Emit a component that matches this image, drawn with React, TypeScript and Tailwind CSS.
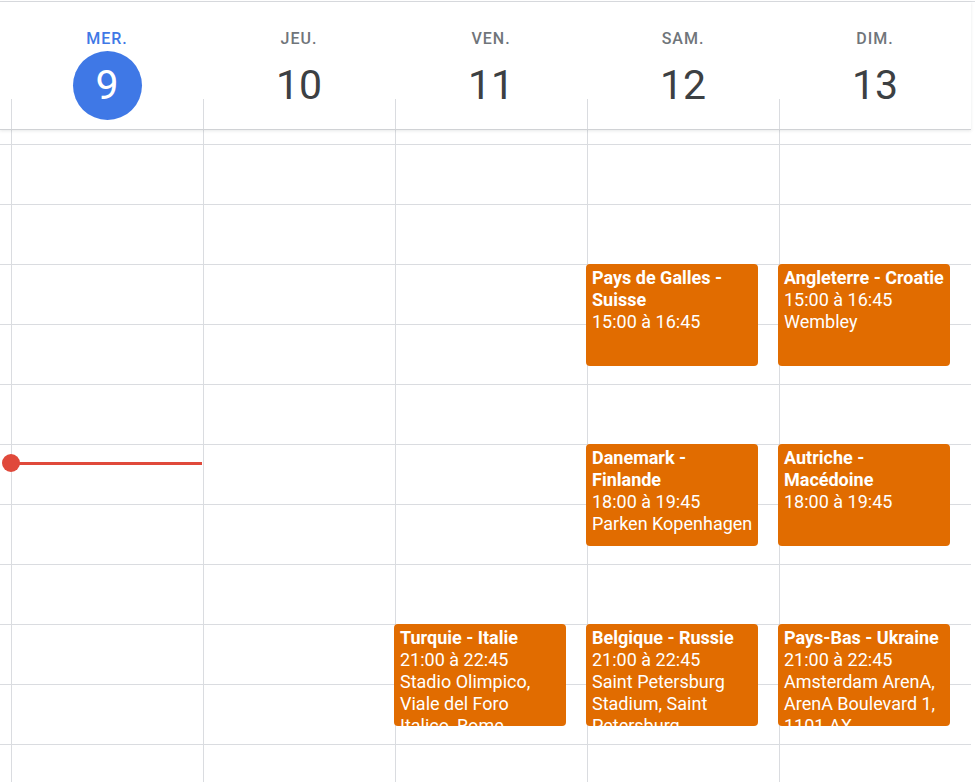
import React from 'react';

interface CalEvent {
  title: string;
  time: string;
  place?: string;
  top: string;
}

interface Day {
  name: string;
  num: string;
  today?: boolean;
  events: CalEvent[];
}

const days: Day[] = [
  { name: 'MER.', num: '9', today: true, events: [] },
  { name: 'JEU.', num: '10', events: [] },
  {
    name: 'VEN.',
    num: '11',
    events: [
      {
        title: 'Turquie - Italie',
        time: '21:00 à 22:45',
        place: 'Stadio Olimpico, Viale del Foro Italico, Rome',
        top: 'top-[494px]',
      },
    ],
  },
  {
    name: 'SAM.',
    num: '12',
    events: [
      { title: 'Pays de Galles - Suisse', time: '15:00 à 16:45', top: 'top-[134px]' },
      {
        title: 'Danemark - Finlande',
        time: '18:00 à 19:45',
        place: 'Parken Kopenhagen',
        top: 'top-[314px]',
      },
      {
        title: 'Belgique - Russie',
        time: '21:00 à 22:45',
        place: 'Saint Petersburg Stadium, Saint Petersburg',
        top: 'top-[494px]',
      },
    ],
  },
  {
    name: 'DIM.',
    num: '13',
    events: [
      {
        title: 'Angleterre - Croatie',
        time: '15:00 à 16:45',
        place: 'Wembley',
        top: 'top-[134px]',
      },
      { title: 'Autriche - Macédoine', time: '18:00 à 19:45', top: 'top-[314px]' },
      {
        title: 'Pays-Bas - Ukraine',
        time: '21:00 à 22:45',
        place: 'Amsterdam ArenA, ArenA Boulevard 1, 1101 AX',
        top: 'top-[494px]',
      },
    ],
  },
];

const HourRows: React.FC = () => (
  <>
    <div className="h-[14px]" />
    {Array.from({ length: 11 }).map((_, i) => (
      <div key={i} className="h-[60px] border-t border-[#dadce0]" />
    ))}
  </>
);

const EventCard: React.FC<{ ev: CalEvent }> = ({ ev }) => (
  <div
    className={`absolute left-[-2px] w-[172px] h-[102px] ${ev.top} rounded-[4px] bg-[#e16c00] pl-[6px] pr-[4px] pt-[3px] text-white text-[18px] leading-[22px] overflow-hidden`}
  >
    <div className="font-bold">{ev.title}</div>
    <div>{ev.time}</div>
    {ev.place && <div>{ev.place}</div>}
  </div>
);

export default function App() {
  return (
    <div className="w-[975px] h-[782px] overflow-hidden bg-white font-['Roboto',sans-serif]">
      {/* Header */}
      <div className="mt-px border-t border-[#dadce0] relative z-10 bg-white">
        <div className="flex w-[971px] h-[128px] border-b border-[#d0d2d5] shadow-[0_1px_3px_rgba(60,64,67,0.12)] bg-white">
          <div className="w-[11px]" />
          {days.map((d) => (
            <div key={d.num} className="relative w-[192px] flex flex-col items-center">
              <div className="absolute left-0 bottom-0 h-[30px] w-px bg-[#dadce0]" />
              <div
                className={`mt-[29px] text-[16px] leading-[16px] font-medium tracking-[1px] ${
                  d.today ? 'text-[#3f78e6]' : 'text-[#70757a]'
                }`}
              >
                {d.name}
              </div>
              <div
                className={`mt-[4px] w-[69px] h-[69px] rounded-full flex items-center justify-center text-[41px] leading-none ${
                  d.today ? 'bg-[#3f78e6] text-white' : 'text-[#3c4043]'
                }`}
              >
                {d.num}
              </div>
            </div>
          ))}
        </div>
      </div>

      {/* Body */}
      <div className="flex w-[971px] h-[652px]">
        <div className="w-[11px]">
          <HourRows />
        </div>
        {days.map((d) => (
          <div key={d.num} className="relative w-[192px] border-l border-[#dadce0]">
            <HourRows />
            {d.events.map((ev) => (
              <EventCard key={ev.title} ev={ev} />
            ))}
            {d.today && (
              <>
                <div className="absolute left-0 top-[332px] w-[190px] h-[3px] bg-[#e0493b]" />
                <div className="absolute left-[-10px] top-[324px] w-[18px] h-[18px] rounded-full bg-[#e0493b]" />
              </>
            )}
          </div>
        ))}
      </div>
    </div>
  );
}
